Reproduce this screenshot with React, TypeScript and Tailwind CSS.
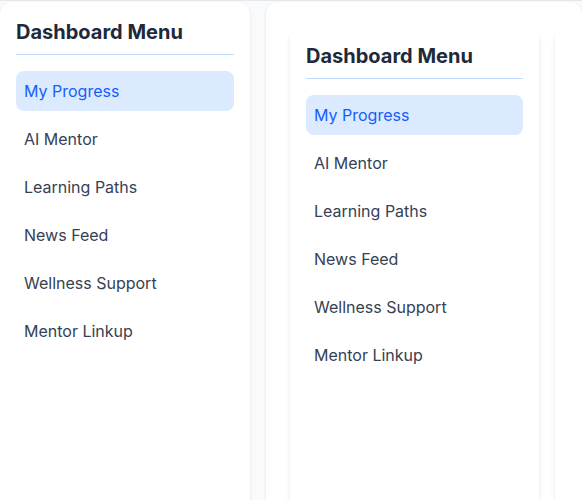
const menuItems = ["My Progress", "AI Mentor", "Learning Paths", "News Feed", "Wellness Support", "Mentor Linkup"];

function DashboardMenu() {
  return (
    <>
      <h2 className="text-xl font-bold text-gray-800 pb-2 border-b border-[#bfdbfe] mb-4">Dashboard Menu</h2>
      <ul className="space-y-2">
        {menuItems.map((item, idx) => (
          <li
            key={item}
            className={`px-2 py-2 rounded-lg text-base ${
              idx === 0 ? "bg-blue-100 text-blue-600" : "text-gray-700"
            }`}
          >
            {item}
          </li>
        ))}
      </ul>
    </>
  );
}

export default function App() {
  return (
    <div
      className="h-[500px] overflow-hidden bg-gray-50 border-t border-gray-200 pt-px flex gap-4"
      style={{ fontFamily: "Inter, 'Noto Sans', sans-serif" }}
    >
      {/* Sidebar */}
      <aside className="w-[250px] shrink-0 bg-white rounded-xl shadow-sm p-4 h-[600px]">
        <DashboardMenu />
      </aside>

      {/* Main */}
      <main className="flex-1 min-w-0 bg-white rounded-xl shadow-sm p-6 h-[600px] overflow-hidden">
        <div className="flex gap-4">
          <div className="w-[249px] shrink-0 bg-white rounded-xl shadow-md p-4 h-[600px]">
            <DashboardMenu />
          </div>
          <div className="w-[249px] shrink-0 bg-white rounded-xl shadow-md h-[600px]" />
        </div>
      </main>
    </div>
  );
}
